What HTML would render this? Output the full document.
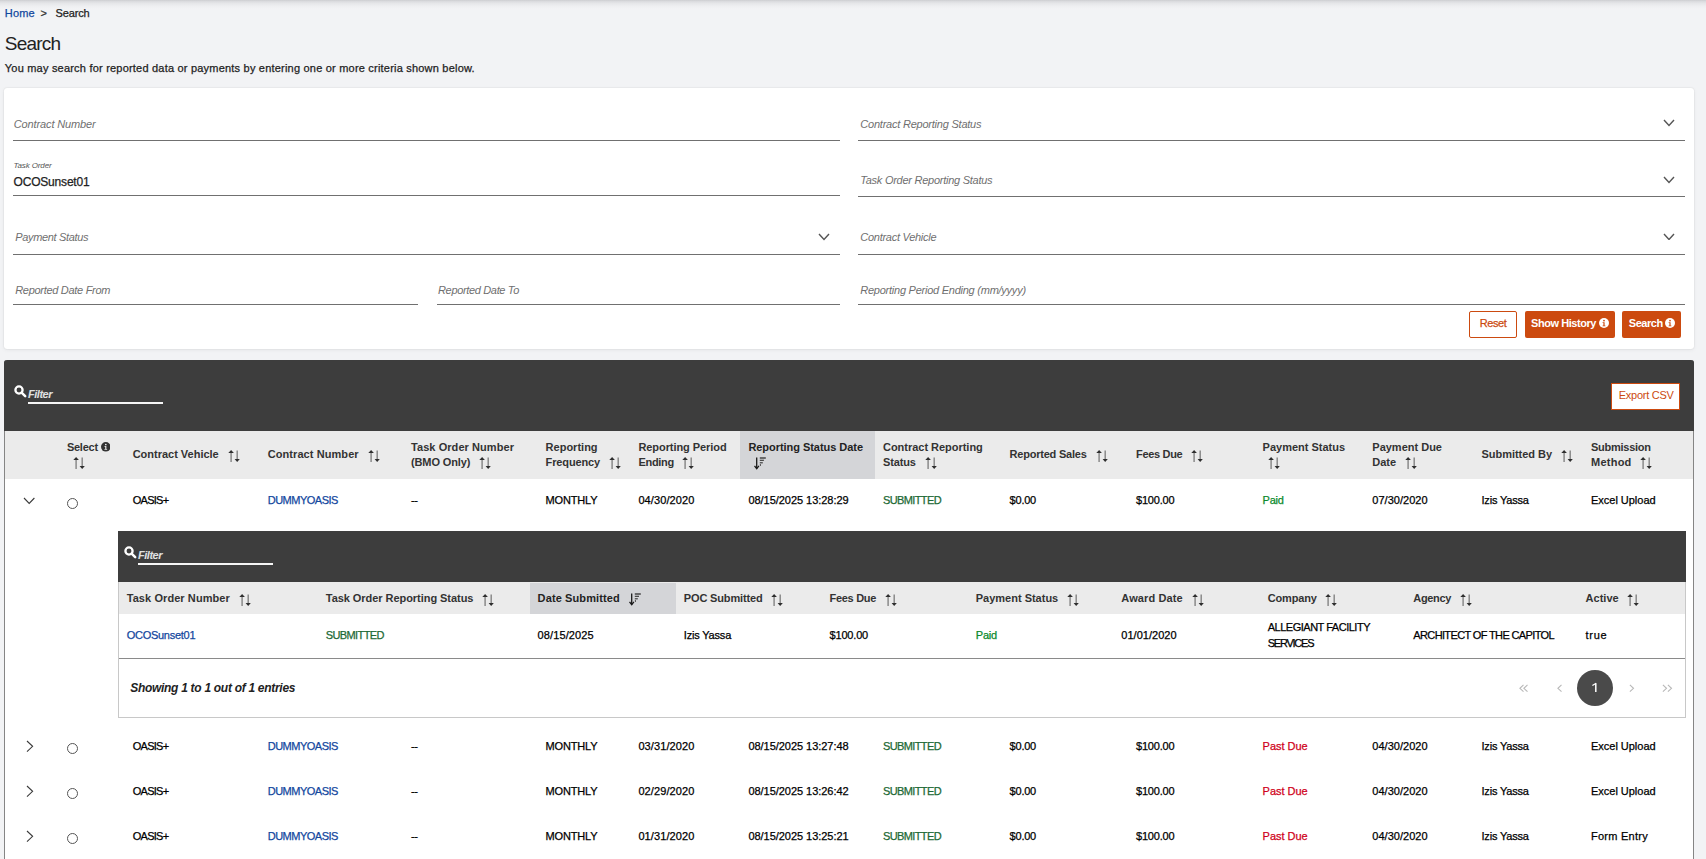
<!DOCTYPE html>
<html><head><meta charset="utf-8"><title>Search</title>
<style>
html,body{margin:0;padding:0;}
body{width:1706px;height:859px;overflow:hidden;position:relative;background:#f2f3f5;font-family:"Liberation Sans",sans-serif;}
.t{position:absolute;white-space:pre;line-height:1;}
.r{-webkit-text-stroke:0.25px currentColor;}
</style></head><body>
<div id="t0" class="t r" style="letter-spacing:0.164px;left:4.8px;top:7.59px;font-size:11px;font-weight:400;font-style:normal;color:#12479e;font-family:'Liberation Sans',sans-serif;">Home</div>
<div id="t1" class="t r" style="left:40.5px;top:7.59px;font-size:11px;font-weight:400;font-style:normal;color:#333;font-family:'Liberation Sans',sans-serif;">&gt;</div>
<div id="t2" class="t r" style="letter-spacing:-0.143px;left:55.6px;top:7.59px;font-size:11px;font-weight:400;font-style:normal;color:#222;font-family:'Liberation Sans',sans-serif;">Search</div>
<div id="t3" class="t" style="letter-spacing:-0.784px;left:4.8px;top:34.32px;font-size:19px;font-weight:400;font-style:normal;color:#222;font-family:'Liberation Sans',sans-serif;">Search</div>
<div id="t4" class="t r" style="letter-spacing:0.206px;left:4.8px;top:63.39px;font-size:11px;font-weight:400;font-style:normal;color:#222;font-family:'Liberation Sans',sans-serif;">You may search for reported data or payments by entering one or more criteria shown below.</div>
<div style="position:absolute;left:4px;top:88px;width:1690px;height:260.5px;background:#fff;border-radius:3px;box-shadow:0 0 1.5px rgba(0,0,0,0.14),0 1px 4px rgba(0,0,0,0.06)"></div>
<div id="t5" class="t" style="letter-spacing:-0.118px;left:13.7px;top:118.59px;font-size:11px;font-weight:400;font-style:italic;color:#6f6f6f;font-family:'Liberation Sans',sans-serif;">Contract Number</div>
<div style="position:absolute;left:13px;top:139.5px;width:827px;height:1.2px;background:#707070"></div>
<div id="t6" class="t" style="letter-spacing:-0.128px;left:13.5px;top:161.93px;font-size:8px;font-weight:400;font-style:italic;color:#555;font-family:'Liberation Sans',sans-serif;">Task Order</div>
<div id="t7" class="t r" style="letter-spacing:-0.186px;left:13.5px;top:175.74px;font-size:12px;font-weight:400;font-style:normal;color:#222;font-family:'Liberation Sans',sans-serif;">OCOSunset01</div>
<div style="position:absolute;left:13px;top:195.0px;width:827px;height:1.2px;background:#707070"></div>
<div id="t8" class="t" style="letter-spacing:-0.333px;left:15.2px;top:231.79px;font-size:11px;font-weight:400;font-style:italic;color:#6f6f6f;font-family:'Liberation Sans',sans-serif;">Payment Status</div>
<svg style="position:absolute;left:818.0px;top:233.25px" width="12" height="7.5" viewBox="0 0 12 7.5"><path d="M1 1L6.0 6.5L11 1" stroke="#555" stroke-width="1.4" fill="none"/></svg>
<div style="position:absolute;left:13px;top:253.8px;width:827px;height:1.2px;background:#707070"></div>
<div id="t9" class="t" style="letter-spacing:-0.293px;left:15.2px;top:285.39px;font-size:11px;font-weight:400;font-style:italic;color:#6f6f6f;font-family:'Liberation Sans',sans-serif;">Reported Date From</div>
<div style="position:absolute;left:13px;top:303.9px;width:405px;height:1.2px;background:#707070"></div>
<div id="t10" class="t" style="letter-spacing:-0.340px;left:438px;top:285.39px;font-size:11px;font-weight:400;font-style:italic;color:#6f6f6f;font-family:'Liberation Sans',sans-serif;">Reported Date To</div>
<div style="position:absolute;left:436.5px;top:303.9px;width:403.5px;height:1.2px;background:#707070"></div>
<div id="t11" class="t" style="letter-spacing:-0.223px;left:860.3px;top:118.59px;font-size:11px;font-weight:400;font-style:italic;color:#6f6f6f;font-family:'Liberation Sans',sans-serif;">Contract Reporting Status</div>
<svg style="position:absolute;left:1663.0px;top:119.05px" width="12" height="7.5" viewBox="0 0 12 7.5"><path d="M1 1L6.0 6.5L11 1" stroke="#555" stroke-width="1.4" fill="none"/></svg>
<div style="position:absolute;left:858px;top:139.8px;width:827px;height:1.2px;background:#707070"></div>
<div id="t12" class="t" style="letter-spacing:-0.259px;left:860.3px;top:175.19px;font-size:11px;font-weight:400;font-style:italic;color:#6f6f6f;font-family:'Liberation Sans',sans-serif;">Task Order Reporting Status</div>
<svg style="position:absolute;left:1663.0px;top:176.05px" width="12" height="7.5" viewBox="0 0 12 7.5"><path d="M1 1L6.0 6.5L11 1" stroke="#555" stroke-width="1.4" fill="none"/></svg>
<div style="position:absolute;left:858px;top:195.8px;width:827px;height:1.2px;background:#707070"></div>
<div id="t13" class="t" style="letter-spacing:-0.270px;left:860.3px;top:231.79px;font-size:11px;font-weight:400;font-style:italic;color:#6f6f6f;font-family:'Liberation Sans',sans-serif;">Contract Vehicle</div>
<svg style="position:absolute;left:1663.0px;top:232.75px" width="12" height="7.5" viewBox="0 0 12 7.5"><path d="M1 1L6.0 6.5L11 1" stroke="#555" stroke-width="1.4" fill="none"/></svg>
<div style="position:absolute;left:858px;top:253.8px;width:827px;height:1.2px;background:#707070"></div>
<div id="t14" class="t" style="letter-spacing:-0.246px;left:860.3px;top:285.39px;font-size:11px;font-weight:400;font-style:italic;color:#6f6f6f;font-family:'Liberation Sans',sans-serif;">Reporting Period Ending (mm/yyyy)</div>
<div style="position:absolute;left:858px;top:303.9px;width:827px;height:1.2px;background:#707070"></div>
<div style="position:absolute;left:1469px;top:311px;width:48px;height:27px;box-sizing:border-box;border:1px solid #cc4a0f;border-radius:2px;background:#fff"></div>
<div id="t15" class="t r" style="letter-spacing:-0.410px;left:1479.7px;top:318.09px;font-size:11px;font-weight:400;font-style:normal;color:#cc4a0f;font-family:'Liberation Sans',sans-serif;">Reset</div>
<div style="position:absolute;left:1525px;top:311px;width:90px;height:27px;background:#cc4a0f;border-radius:2px"></div>
<div id="t16" class="t" style="letter-spacing:-0.441px;left:1531px;top:318.09px;font-size:11px;font-weight:700;font-style:normal;color:#fff;font-family:'Liberation Sans',sans-serif;">Show History</div>
<svg style="position:absolute;left:1598.6px;top:318.3px" width="10" height="10" viewBox="0 0 10 10"><circle cx="5" cy="5" r="5" fill="#fff"/><circle cx="5" cy="2.6" r="0.9" fill="#cc4a0f"/><path d="M3.6 4.2H5.6V7.4H6.4V8.2H3.6V7.4H4.4V5H3.6Z" fill="#cc4a0f"/></svg>
<div style="position:absolute;left:1622px;top:311px;width:59px;height:27px;background:#cc4a0f;border-radius:2px"></div>
<div id="t17" class="t" style="letter-spacing:-0.451px;left:1628.8px;top:318.09px;font-size:11px;font-weight:700;font-style:normal;color:#fff;font-family:'Liberation Sans',sans-serif;">Search</div>
<svg style="position:absolute;left:1665px;top:318.3px" width="10" height="10" viewBox="0 0 10 10"><circle cx="5" cy="5" r="5" fill="#fff"/><circle cx="5" cy="2.6" r="0.9" fill="#cc4a0f"/><path d="M3.6 4.2H5.6V7.4H6.4V8.2H3.6V7.4H4.4V5H3.6Z" fill="#cc4a0f"/></svg>
<div style="position:absolute;left:4px;top:360px;width:1690px;height:499px;background:#fff;border-left:1px solid #858585;border-right:1px solid #858585;box-sizing:border-box;border-top-left-radius:3px;border-top-right-radius:3px"></div>
<div style="position:absolute;left:4px;top:360px;width:1690px;height:71px;background:#3d3d3d;border-top-left-radius:3px;border-top-right-radius:3px"></div>
<svg style="position:absolute;left:13.7px;top:385.3px" width="13" height="13" viewBox="0 0 13 13"><circle cx="5" cy="5" r="3.6" stroke="#fff" stroke-width="2.3" fill="none"/><path d="M7.6 7.6L11.2 11.2" stroke="#fff" stroke-width="2.5" stroke-linecap="round"/></svg>
<div id="t18" class="t" style="letter-spacing:-0.484px;left:28px;top:388.69px;font-size:11px;font-weight:700;font-style:italic;color:#e0e0e0;font-family:'Liberation Sans',sans-serif;">Filter</div>
<div style="position:absolute;left:28px;top:401.8px;width:135px;height:2px;background:#f5f5f5"></div>
<div style="position:absolute;left:1611px;top:383px;width:69px;height:27px;box-sizing:border-box;border:1.5px solid #cc4a0f;background:#fff"></div>
<div id="t19" class="t r" style="letter-spacing:-0.247px;left:1618.7px;top:389.69px;font-size:11px;font-weight:400;font-style:normal;color:#cc4a0f;font-family:'Liberation Sans',sans-serif;-webkit-text-stroke:0;">Export CSV</div>
<div style="position:absolute;left:5px;top:431px;width:1688px;height:47.5px;background:#ebebeb"></div>
<div style="position:absolute;left:740px;top:431px;width:135px;height:47.5px;background:#d4d5d8"></div>
<div id="t20" class="t" style="letter-spacing:-0.237px;left:66.9px;top:442.39px;font-size:11px;font-weight:700;font-style:normal;color:#333;font-family:'Liberation Sans',sans-serif;">Select</div>
<svg style="position:absolute;left:100.8px;top:442.2px" width="9.6" height="9.6" viewBox="0 0 10 10"><circle cx="5" cy="5" r="5" fill="#333"/><circle cx="5" cy="2.6" r="0.9" fill="#ebebeb"/><path d="M3.6 4.2H5.6V7.4H6.4V8.2H3.6V7.4H4.4V5H3.6Z" fill="#ebebeb"/></svg>
<svg style="position:absolute;left:72.5px;top:457px" width="13" height="13" viewBox="0 0 13 13"><path d="M3.1 2.4V12" stroke="#8a8a8a" stroke-width="1.5"/><path d="M0.3 3.1L3.1 0L5.9 3.1Z" fill="#2e2e2e"/><path d="M9.2 0.5V10.2" stroke="#8a8a8a" stroke-width="1.5"/><path d="M6.6 9L9.2 12.1L11.8 9Z" fill="#2e2e2e"/></svg>
<div id="t21" class="t" style="letter-spacing:-0.013px;left:132.7px;top:448.79px;font-size:11px;font-weight:700;font-style:normal;color:#333;font-family:'Liberation Sans',sans-serif;">Contract Vehicle</div>
<svg style="position:absolute;left:228px;top:449.7px" width="13" height="13" viewBox="0 0 13 13"><path d="M3.1 2.4V12" stroke="#8a8a8a" stroke-width="1.5"/><path d="M0.3 3.1L3.1 0L5.9 3.1Z" fill="#2e2e2e"/><path d="M9.2 0.5V10.2" stroke="#8a8a8a" stroke-width="1.5"/><path d="M6.6 9L9.2 12.1L11.8 9Z" fill="#2e2e2e"/></svg>
<div id="t22" class="t" style="letter-spacing:0.077px;left:267.7px;top:448.79px;font-size:11px;font-weight:700;font-style:normal;color:#333;font-family:'Liberation Sans',sans-serif;">Contract Number</div>
<svg style="position:absolute;left:368px;top:449.7px" width="13" height="13" viewBox="0 0 13 13"><path d="M3.1 2.4V12" stroke="#8a8a8a" stroke-width="1.5"/><path d="M0.3 3.1L3.1 0L5.9 3.1Z" fill="#2e2e2e"/><path d="M9.2 0.5V10.2" stroke="#8a8a8a" stroke-width="1.5"/><path d="M6.6 9L9.2 12.1L11.8 9Z" fill="#2e2e2e"/></svg>
<div id="t23" class="t" style="letter-spacing:0.065px;left:411px;top:441.79px;font-size:11px;font-weight:700;font-style:normal;color:#333;font-family:'Liberation Sans',sans-serif;">Task Order Number</div>
<div id="t24" class="t" style="letter-spacing:-0.120px;left:411px;top:456.99px;font-size:11px;font-weight:700;font-style:normal;color:#333;font-family:'Liberation Sans',sans-serif;">(BMO Only)</div>
<svg style="position:absolute;left:479px;top:457px" width="13" height="13" viewBox="0 0 13 13"><path d="M3.1 2.4V12" stroke="#8a8a8a" stroke-width="1.5"/><path d="M0.3 3.1L3.1 0L5.9 3.1Z" fill="#2e2e2e"/><path d="M9.2 0.5V10.2" stroke="#8a8a8a" stroke-width="1.5"/><path d="M6.6 9L9.2 12.1L11.8 9Z" fill="#2e2e2e"/></svg>
<div id="t25" class="t" style="letter-spacing:0.005px;left:545.6px;top:441.79px;font-size:11px;font-weight:700;font-style:normal;color:#333;font-family:'Liberation Sans',sans-serif;">Reporting</div>
<div id="t26" class="t" style="letter-spacing:-0.138px;left:545.6px;top:456.99px;font-size:11px;font-weight:700;font-style:normal;color:#333;font-family:'Liberation Sans',sans-serif;">Frequency</div>
<svg style="position:absolute;left:609px;top:457px" width="13" height="13" viewBox="0 0 13 13"><path d="M3.1 2.4V12" stroke="#8a8a8a" stroke-width="1.5"/><path d="M0.3 3.1L3.1 0L5.9 3.1Z" fill="#2e2e2e"/><path d="M9.2 0.5V10.2" stroke="#8a8a8a" stroke-width="1.5"/><path d="M6.6 9L9.2 12.1L11.8 9Z" fill="#2e2e2e"/></svg>
<div id="t27" class="t" style="letter-spacing:-0.065px;left:638.4px;top:441.79px;font-size:11px;font-weight:700;font-style:normal;color:#333;font-family:'Liberation Sans',sans-serif;">Reporting Period</div>
<div id="t28" class="t" style="letter-spacing:-0.280px;left:638.4px;top:456.99px;font-size:11px;font-weight:700;font-style:normal;color:#333;font-family:'Liberation Sans',sans-serif;">Ending</div>
<svg style="position:absolute;left:681.7px;top:457px" width="13" height="13" viewBox="0 0 13 13"><path d="M3.1 2.4V12" stroke="#8a8a8a" stroke-width="1.5"/><path d="M0.3 3.1L3.1 0L5.9 3.1Z" fill="#2e2e2e"/><path d="M9.2 0.5V10.2" stroke="#8a8a8a" stroke-width="1.5"/><path d="M6.6 9L9.2 12.1L11.8 9Z" fill="#2e2e2e"/></svg>
<div id="t29" class="t" style="letter-spacing:-0.044px;left:748.4px;top:441.69px;font-size:11px;font-weight:700;font-style:normal;color:#222;font-family:'Liberation Sans',sans-serif;">Reporting Status Date</div>
<svg style="position:absolute;left:753.5px;top:456.5px" width="13" height="13" viewBox="0 0 13 13"><path d="M2.7 0.6V11.5" stroke="#1a1a1a" stroke-width="1.3"/><path d="M0.5 8.9L2.7 11.6L4.9 8.9" stroke="#1a1a1a" stroke-width="1.3" fill="none"/><path d="M5.8 1H11.8" stroke="#111" stroke-width="1.1"/><path d="M5.8 3.3H10" stroke="#333" stroke-width="1.1"/><path d="M5.8 5.8H8.8" stroke="#333" stroke-width="1.1"/><circle cx="6.4" cy="8" r="0.65" fill="#111"/></svg>
<div id="t30" class="t" style="letter-spacing:-0.024px;left:883px;top:441.79px;font-size:11px;font-weight:700;font-style:normal;color:#333;font-family:'Liberation Sans',sans-serif;">Contract Reporting</div>
<div id="t31" class="t" style="letter-spacing:-0.154px;left:883px;top:456.99px;font-size:11px;font-weight:700;font-style:normal;color:#333;font-family:'Liberation Sans',sans-serif;">Status</div>
<svg style="position:absolute;left:925px;top:457px" width="13" height="13" viewBox="0 0 13 13"><path d="M3.1 2.4V12" stroke="#8a8a8a" stroke-width="1.5"/><path d="M0.3 3.1L3.1 0L5.9 3.1Z" fill="#2e2e2e"/><path d="M9.2 0.5V10.2" stroke="#8a8a8a" stroke-width="1.5"/><path d="M6.6 9L9.2 12.1L11.8 9Z" fill="#2e2e2e"/></svg>
<div id="t32" class="t" style="letter-spacing:-0.221px;left:1009.6px;top:448.79px;font-size:11px;font-weight:700;font-style:normal;color:#333;font-family:'Liberation Sans',sans-serif;">Reported Sales</div>
<svg style="position:absolute;left:1096.3px;top:449.7px" width="13" height="13" viewBox="0 0 13 13"><path d="M3.1 2.4V12" stroke="#8a8a8a" stroke-width="1.5"/><path d="M0.3 3.1L3.1 0L5.9 3.1Z" fill="#2e2e2e"/><path d="M9.2 0.5V10.2" stroke="#8a8a8a" stroke-width="1.5"/><path d="M6.6 9L9.2 12.1L11.8 9Z" fill="#2e2e2e"/></svg>
<div id="t33" class="t" style="letter-spacing:-0.315px;left:1136px;top:448.79px;font-size:11px;font-weight:700;font-style:normal;color:#333;font-family:'Liberation Sans',sans-serif;">Fees Due</div>
<svg style="position:absolute;left:1191.3px;top:449.7px" width="13" height="13" viewBox="0 0 13 13"><path d="M3.1 2.4V12" stroke="#8a8a8a" stroke-width="1.5"/><path d="M0.3 3.1L3.1 0L5.9 3.1Z" fill="#2e2e2e"/><path d="M9.2 0.5V10.2" stroke="#8a8a8a" stroke-width="1.5"/><path d="M6.6 9L9.2 12.1L11.8 9Z" fill="#2e2e2e"/></svg>
<div id="t34" class="t" style="letter-spacing:-0.009px;left:1262.6px;top:441.79px;font-size:11px;font-weight:700;font-style:normal;color:#333;font-family:'Liberation Sans',sans-serif;">Payment Status</div>
<div id="t35" class="t" style="left:1262.6px;top:456.99px;font-size:11px;font-weight:700;font-style:normal;color:#333;font-family:'Liberation Sans',sans-serif;"></div>
<svg style="position:absolute;left:1268.3px;top:457px" width="13" height="13" viewBox="0 0 13 13"><path d="M3.1 2.4V12" stroke="#8a8a8a" stroke-width="1.5"/><path d="M0.3 3.1L3.1 0L5.9 3.1Z" fill="#2e2e2e"/><path d="M9.2 0.5V10.2" stroke="#8a8a8a" stroke-width="1.5"/><path d="M6.6 9L9.2 12.1L11.8 9Z" fill="#2e2e2e"/></svg>
<div id="t36" class="t" style="letter-spacing:-0.000px;left:1372.3px;top:441.79px;font-size:11px;font-weight:700;font-style:normal;color:#333;font-family:'Liberation Sans',sans-serif;">Payment Due</div>
<div id="t37" class="t" style="letter-spacing:-0.036px;left:1372.3px;top:456.99px;font-size:11px;font-weight:700;font-style:normal;color:#333;font-family:'Liberation Sans',sans-serif;">Date</div>
<svg style="position:absolute;left:1405px;top:457px" width="13" height="13" viewBox="0 0 13 13"><path d="M3.1 2.4V12" stroke="#8a8a8a" stroke-width="1.5"/><path d="M0.3 3.1L3.1 0L5.9 3.1Z" fill="#2e2e2e"/><path d="M9.2 0.5V10.2" stroke="#8a8a8a" stroke-width="1.5"/><path d="M6.6 9L9.2 12.1L11.8 9Z" fill="#2e2e2e"/></svg>
<div id="t38" class="t" style="letter-spacing:-0.034px;left:1481.5px;top:448.79px;font-size:11px;font-weight:700;font-style:normal;color:#333;font-family:'Liberation Sans',sans-serif;">Submitted By</div>
<svg style="position:absolute;left:1561px;top:449.7px" width="13" height="13" viewBox="0 0 13 13"><path d="M3.1 2.4V12" stroke="#8a8a8a" stroke-width="1.5"/><path d="M0.3 3.1L3.1 0L5.9 3.1Z" fill="#2e2e2e"/><path d="M9.2 0.5V10.2" stroke="#8a8a8a" stroke-width="1.5"/><path d="M6.6 9L9.2 12.1L11.8 9Z" fill="#2e2e2e"/></svg>
<div id="t39" class="t" style="letter-spacing:-0.254px;left:1591px;top:441.79px;font-size:11px;font-weight:700;font-style:normal;color:#333;font-family:'Liberation Sans',sans-serif;">Submission</div>
<div id="t40" class="t" style="letter-spacing:0.248px;left:1591px;top:456.99px;font-size:11px;font-weight:700;font-style:normal;color:#333;font-family:'Liberation Sans',sans-serif;">Method</div>
<svg style="position:absolute;left:1639.8px;top:457px" width="13" height="13" viewBox="0 0 13 13"><path d="M3.1 2.4V12" stroke="#8a8a8a" stroke-width="1.5"/><path d="M0.3 3.1L3.1 0L5.9 3.1Z" fill="#2e2e2e"/><path d="M9.2 0.5V10.2" stroke="#8a8a8a" stroke-width="1.5"/><path d="M6.6 9L9.2 12.1L11.8 9Z" fill="#2e2e2e"/></svg>
<svg style="position:absolute;left:23.25px;top:497.2px" width="12.4" height="7.4" viewBox="0 0 12.4 7.4"><path d="M1 1L6.2 6.4L11.4 1" stroke="#3a3a3a" stroke-width="1.1" fill="none"/></svg>
<div style="position:absolute;left:66.95px;top:498.0px;width:11.0px;height:11.0px;box-sizing:border-box;border:1.1px solid #555;border-radius:50%;background:#fff"></div>
<div id="t41" class="t r" style="letter-spacing:-0.724px;left:132.7px;top:494.89px;font-size:11px;font-weight:400;font-style:normal;color:#000;font-family:'Liberation Sans',sans-serif;">OASIS+</div>
<div id="t42" class="t r" style="letter-spacing:-0.489px;left:267.7px;top:494.89px;font-size:11px;font-weight:400;font-style:normal;color:#12479e;font-family:'Liberation Sans',sans-serif;">DUMMYOASIS</div>
<div id="t43" class="t r" style="letter-spacing:-0.514px;left:411px;top:494.89px;font-size:11px;font-weight:400;font-style:normal;color:#000;font-family:'Liberation Sans',sans-serif;">--</div>
<div id="t44" class="t r" style="letter-spacing:-0.181px;left:545.6px;top:494.89px;font-size:11px;font-weight:400;font-style:normal;color:#000;font-family:'Liberation Sans',sans-serif;">MONTHLY</div>
<div id="t45" class="t r" style="letter-spacing:0.094px;left:638.4px;top:494.89px;font-size:11px;font-weight:400;font-style:normal;color:#000;font-family:'Liberation Sans',sans-serif;">04/30/2020</div>
<div id="t46" class="t r" style="letter-spacing:-0.039px;left:748.4px;top:494.89px;font-size:11px;font-weight:400;font-style:normal;color:#000;font-family:'Liberation Sans',sans-serif;">08/15/2025 13:28:29</div>
<div id="t47" class="t r" style="letter-spacing:-0.618px;left:883px;top:494.89px;font-size:11px;font-weight:400;font-style:normal;color:#1c6934;font-family:'Liberation Sans',sans-serif;">SUBMITTED</div>
<div id="t48" class="t r" style="letter-spacing:-0.226px;left:1009.6px;top:494.89px;font-size:11px;font-weight:400;font-style:normal;color:#000;font-family:'Liberation Sans',sans-serif;">$0.00</div>
<div id="t49" class="t r" style="letter-spacing:-0.195px;left:1136px;top:494.89px;font-size:11px;font-weight:400;font-style:normal;color:#000;font-family:'Liberation Sans',sans-serif;">$100.00</div>
<div id="t50" class="t r" style="letter-spacing:-0.233px;left:1262.6px;top:494.89px;font-size:11px;font-weight:400;font-style:normal;color:#0b8a2c;font-family:'Liberation Sans',sans-serif;">Paid</div>
<div id="t51" class="t r" style="letter-spacing:0.024px;left:1372.3px;top:494.89px;font-size:11px;font-weight:400;font-style:normal;color:#000;font-family:'Liberation Sans',sans-serif;">07/30/2020</div>
<div id="t52" class="t r" style="letter-spacing:-0.183px;left:1481.5px;top:494.89px;font-size:11px;font-weight:400;font-style:normal;color:#000;font-family:'Liberation Sans',sans-serif;">Izis Yassa</div>
<div id="t53" class="t r" style="letter-spacing:-0.019px;left:1591px;top:494.89px;font-size:11px;font-weight:400;font-style:normal;color:#000;font-family:'Liberation Sans',sans-serif;">Excel Upload</div>
<div style="position:absolute;left:118px;top:531px;width:1568px;height:51px;background:#3d3d3d"></div>
<svg style="position:absolute;left:123.7px;top:545.7px" width="13" height="13" viewBox="0 0 13 13"><circle cx="5" cy="5" r="3.6" stroke="#fff" stroke-width="2.3" fill="none"/><path d="M7.6 7.6L11.2 11.2" stroke="#fff" stroke-width="2.5" stroke-linecap="round"/></svg>
<div id="t54" class="t" style="letter-spacing:-0.484px;left:138px;top:549.59px;font-size:11px;font-weight:700;font-style:italic;color:#e0e0e0;font-family:'Liberation Sans',sans-serif;">Filter</div>
<div style="position:absolute;left:138px;top:562.7px;width:135px;height:2px;background:#f5f5f5"></div>
<div style="position:absolute;left:118px;top:582px;width:1568px;height:135.5px;box-sizing:border-box;border:1px solid #c8c8c8;border-top:none;background:#fff"></div>
<div style="position:absolute;left:119px;top:582px;width:1566px;height:31.8px;background:#ebebeb"></div>
<div style="position:absolute;left:530px;top:582.5px;width:146px;height:31.3px;background:#d4d5d8"></div>
<div style="position:absolute;left:119px;top:657.8px;width:1566px;height:1.3px;background:#8a8a8a"></div>
<div id="t55" class="t" style="letter-spacing:0.077px;left:126.7px;top:592.59px;font-size:11px;font-weight:700;font-style:normal;color:#333;font-family:'Liberation Sans',sans-serif;">Task Order Number</div>
<svg style="position:absolute;left:239px;top:593.5px" width="13" height="13" viewBox="0 0 13 13"><path d="M3.1 2.4V12" stroke="#8a8a8a" stroke-width="1.5"/><path d="M0.3 3.1L3.1 0L5.9 3.1Z" fill="#2e2e2e"/><path d="M9.2 0.5V10.2" stroke="#8a8a8a" stroke-width="1.5"/><path d="M6.6 9L9.2 12.1L11.8 9Z" fill="#2e2e2e"/></svg>
<div id="t56" class="t" style="letter-spacing:-0.050px;left:325.8px;top:592.59px;font-size:11px;font-weight:700;font-style:normal;color:#333;font-family:'Liberation Sans',sans-serif;">Task Order Reporting Status</div>
<svg style="position:absolute;left:482.3px;top:593.5px" width="13" height="13" viewBox="0 0 13 13"><path d="M3.1 2.4V12" stroke="#8a8a8a" stroke-width="1.5"/><path d="M0.3 3.1L3.1 0L5.9 3.1Z" fill="#2e2e2e"/><path d="M9.2 0.5V10.2" stroke="#8a8a8a" stroke-width="1.5"/><path d="M6.6 9L9.2 12.1L11.8 9Z" fill="#2e2e2e"/></svg>
<div id="t57" class="t" style="letter-spacing:0.115px;left:537.6px;top:592.59px;font-size:11px;font-weight:700;font-style:normal;color:#222;font-family:'Liberation Sans',sans-serif;">Date Submitted</div>
<svg style="position:absolute;left:628.5px;top:593.3px" width="13" height="13" viewBox="0 0 13 13"><path d="M2.7 0.6V11.5" stroke="#1a1a1a" stroke-width="1.3"/><path d="M0.5 8.9L2.7 11.6L4.9 8.9" stroke="#1a1a1a" stroke-width="1.3" fill="none"/><path d="M5.8 1H11.8" stroke="#111" stroke-width="1.1"/><path d="M5.8 3.3H10" stroke="#333" stroke-width="1.1"/><path d="M5.8 5.8H8.8" stroke="#333" stroke-width="1.1"/><circle cx="6.4" cy="8" r="0.65" fill="#111"/></svg>
<div id="t58" class="t" style="letter-spacing:-0.152px;left:683.8px;top:592.59px;font-size:11px;font-weight:700;font-style:normal;color:#333;font-family:'Liberation Sans',sans-serif;">POC Submitted</div>
<svg style="position:absolute;left:770.5px;top:593.5px" width="13" height="13" viewBox="0 0 13 13"><path d="M3.1 2.4V12" stroke="#8a8a8a" stroke-width="1.5"/><path d="M0.3 3.1L3.1 0L5.9 3.1Z" fill="#2e2e2e"/><path d="M9.2 0.5V10.2" stroke="#8a8a8a" stroke-width="1.5"/><path d="M6.6 9L9.2 12.1L11.8 9Z" fill="#2e2e2e"/></svg>
<div id="t59" class="t" style="letter-spacing:-0.315px;left:829.6px;top:592.59px;font-size:11px;font-weight:700;font-style:normal;color:#333;font-family:'Liberation Sans',sans-serif;">Fees Due</div>
<svg style="position:absolute;left:884.7px;top:593.5px" width="13" height="13" viewBox="0 0 13 13"><path d="M3.1 2.4V12" stroke="#8a8a8a" stroke-width="1.5"/><path d="M0.3 3.1L3.1 0L5.9 3.1Z" fill="#2e2e2e"/><path d="M9.2 0.5V10.2" stroke="#8a8a8a" stroke-width="1.5"/><path d="M6.6 9L9.2 12.1L11.8 9Z" fill="#2e2e2e"/></svg>
<div id="t60" class="t" style="letter-spacing:-0.009px;left:975.8px;top:592.59px;font-size:11px;font-weight:700;font-style:normal;color:#333;font-family:'Liberation Sans',sans-serif;">Payment Status</div>
<svg style="position:absolute;left:1067px;top:593.5px" width="13" height="13" viewBox="0 0 13 13"><path d="M3.1 2.4V12" stroke="#8a8a8a" stroke-width="1.5"/><path d="M0.3 3.1L3.1 0L5.9 3.1Z" fill="#2e2e2e"/><path d="M9.2 0.5V10.2" stroke="#8a8a8a" stroke-width="1.5"/><path d="M6.6 9L9.2 12.1L11.8 9Z" fill="#2e2e2e"/></svg>
<div id="t61" class="t" style="letter-spacing:0.117px;left:1121.3px;top:592.59px;font-size:11px;font-weight:700;font-style:normal;color:#333;font-family:'Liberation Sans',sans-serif;">Award Date</div>
<svg style="position:absolute;left:1191.6px;top:593.5px" width="13" height="13" viewBox="0 0 13 13"><path d="M3.1 2.4V12" stroke="#8a8a8a" stroke-width="1.5"/><path d="M0.3 3.1L3.1 0L5.9 3.1Z" fill="#2e2e2e"/><path d="M9.2 0.5V10.2" stroke="#8a8a8a" stroke-width="1.5"/><path d="M6.6 9L9.2 12.1L11.8 9Z" fill="#2e2e2e"/></svg>
<div id="t62" class="t" style="letter-spacing:-0.161px;left:1267.7px;top:592.59px;font-size:11px;font-weight:700;font-style:normal;color:#333;font-family:'Liberation Sans',sans-serif;">Company</div>
<svg style="position:absolute;left:1324.5px;top:593.5px" width="13" height="13" viewBox="0 0 13 13"><path d="M3.1 2.4V12" stroke="#8a8a8a" stroke-width="1.5"/><path d="M0.3 3.1L3.1 0L5.9 3.1Z" fill="#2e2e2e"/><path d="M9.2 0.5V10.2" stroke="#8a8a8a" stroke-width="1.5"/><path d="M6.6 9L9.2 12.1L11.8 9Z" fill="#2e2e2e"/></svg>
<div id="t63" class="t" style="letter-spacing:-0.342px;left:1413.3px;top:592.59px;font-size:11px;font-weight:700;font-style:normal;color:#333;font-family:'Liberation Sans',sans-serif;">Agency</div>
<svg style="position:absolute;left:1459.5px;top:593.5px" width="13" height="13" viewBox="0 0 13 13"><path d="M3.1 2.4V12" stroke="#8a8a8a" stroke-width="1.5"/><path d="M0.3 3.1L3.1 0L5.9 3.1Z" fill="#2e2e2e"/><path d="M9.2 0.5V10.2" stroke="#8a8a8a" stroke-width="1.5"/><path d="M6.6 9L9.2 12.1L11.8 9Z" fill="#2e2e2e"/></svg>
<div id="t64" class="t" style="letter-spacing:0.011px;left:1585.6px;top:592.59px;font-size:11px;font-weight:700;font-style:normal;color:#333;font-family:'Liberation Sans',sans-serif;">Active</div>
<svg style="position:absolute;left:1626.5px;top:593.5px" width="13" height="13" viewBox="0 0 13 13"><path d="M3.1 2.4V12" stroke="#8a8a8a" stroke-width="1.5"/><path d="M0.3 3.1L3.1 0L5.9 3.1Z" fill="#2e2e2e"/><path d="M9.2 0.5V10.2" stroke="#8a8a8a" stroke-width="1.5"/><path d="M6.6 9L9.2 12.1L11.8 9Z" fill="#2e2e2e"/></svg>
<div id="t65" class="t r" style="letter-spacing:-0.268px;left:126.7px;top:629.89px;font-size:11px;font-weight:400;font-style:normal;color:#12479e;font-family:'Liberation Sans',sans-serif;">OCOSunset01</div>
<div id="t66" class="t r" style="letter-spacing:-0.618px;left:325.8px;top:629.89px;font-size:11px;font-weight:400;font-style:normal;color:#1c6934;font-family:'Liberation Sans',sans-serif;">SUBMITTED</div>
<div id="t67" class="t r" style="letter-spacing:0.104px;left:537.6px;top:629.89px;font-size:11px;font-weight:400;font-style:normal;color:#000;font-family:'Liberation Sans',sans-serif;">08/15/2025</div>
<div id="t68" class="t r" style="letter-spacing:-0.183px;left:683.8px;top:629.89px;font-size:11px;font-weight:400;font-style:normal;color:#000;font-family:'Liberation Sans',sans-serif;">Izis Yassa</div>
<div id="t69" class="t r" style="letter-spacing:-0.195px;left:829.6px;top:629.89px;font-size:11px;font-weight:400;font-style:normal;color:#000;font-family:'Liberation Sans',sans-serif;">$100.00</div>
<div id="t70" class="t r" style="letter-spacing:-0.233px;left:975.8px;top:629.89px;font-size:11px;font-weight:400;font-style:normal;color:#0b8a2c;font-family:'Liberation Sans',sans-serif;">Paid</div>
<div id="t71" class="t r" style="letter-spacing:0.024px;left:1121.3px;top:629.89px;font-size:11px;font-weight:400;font-style:normal;color:#000;font-family:'Liberation Sans',sans-serif;">01/01/2020</div>
<div id="t72" class="t r" style="letter-spacing:-0.487px;left:1267.7px;top:622.29px;font-size:11px;font-weight:400;font-style:normal;color:#000;font-family:'Liberation Sans',sans-serif;">ALLEGIANT FACILITY</div>
<div id="t73" class="t r" style="letter-spacing:-1.230px;left:1267.7px;top:637.89px;font-size:11px;font-weight:400;font-style:normal;color:#000;font-family:'Liberation Sans',sans-serif;">SERVICES</div>
<div id="t74" class="t r" style="letter-spacing:-0.632px;left:1413.3px;top:629.89px;font-size:11px;font-weight:400;font-style:normal;color:#000;font-family:'Liberation Sans',sans-serif;">ARCHITECT OF THE CAPITOL</div>
<div id="t75" class="t r" style="letter-spacing:0.683px;left:1585.6px;top:629.89px;font-size:11px;font-weight:400;font-style:normal;color:#000;font-family:'Liberation Sans',sans-serif;">true</div>
<div id="t76" class="t" style="letter-spacing:-0.291px;left:130.2px;top:681.74px;font-size:12px;font-weight:700;font-style:italic;color:#222;font-family:'Liberation Sans',sans-serif;">Showing 1 to 1 out of 1 entries</div>
<svg style="position:absolute;left:1518.5px;top:684px" width="6" height="8.5" viewBox="-0.3 -0.4 6 8.5"><path d="M4.2 0.5L0.6 3.9L4.2 7.3" stroke="#b8b8b8" stroke-width="1.1" fill="none"/></svg>
<svg style="position:absolute;left:1523.0px;top:684px" width="6" height="8.5" viewBox="-0.3 -0.4 6 8.5"><path d="M4.2 0.5L0.6 3.9L4.2 7.3" stroke="#b8b8b8" stroke-width="1.1" fill="none"/></svg>
<svg style="position:absolute;left:1556.7px;top:684px" width="6" height="8.5" viewBox="-0.3 -0.4 6 8.5"><path d="M4.2 0.5L0.6 3.9L4.2 7.3" stroke="#b8b8b8" stroke-width="1.1" fill="none"/></svg>
<div style="position:absolute;left:1577px;top:670px;width:36px;height:36px;border-radius:50%;background:#4a4a4a"></div>
<svg style="position:absolute;left:1590px;top:681px" width="10" height="13" viewBox="0 0 10 13"><path d="M5.8 2.4V11" stroke="#fff" stroke-width="1.5"/><path d="M6.2 2.2L2.4 4.6" stroke="#fff" stroke-width="1.2"/></svg>
<svg style="position:absolute;left:1628.7px;top:684px" width="6" height="8.5" viewBox="-0.3 -0.4 6 8.5"><path d="M0.6 0.5L4.2 3.9L0.6 7.3" stroke="#b8b8b8" stroke-width="1.1" fill="none"/></svg>
<svg style="position:absolute;left:1662.3px;top:684px" width="6" height="8.5" viewBox="-0.3 -0.4 6 8.5"><path d="M0.6 0.5L4.2 3.9L0.6 7.3" stroke="#b8b8b8" stroke-width="1.1" fill="none"/></svg>
<svg style="position:absolute;left:1666.8px;top:684px" width="6" height="8.5" viewBox="-0.3 -0.4 6 8.5"><path d="M0.6 0.5L4.2 3.9L0.6 7.3" stroke="#b8b8b8" stroke-width="1.1" fill="none"/></svg>
<svg style="position:absolute;left:26.2px;top:740.2px" width="7.6" height="12.6" viewBox="0 0 7.6 12.6"><path d="M1 1L6.6 6.3L1 11.6" stroke="#3a3a3a" stroke-width="1.1" fill="none"/></svg>
<div style="position:absolute;left:66.95px;top:742.8px;width:11.0px;height:11.0px;box-sizing:border-box;border:1.1px solid #555;border-radius:50%;background:#fff"></div>
<div id="t77" class="t r" style="letter-spacing:-0.724px;left:132.7px;top:740.59px;font-size:11px;font-weight:400;font-style:normal;color:#000;font-family:'Liberation Sans',sans-serif;">OASIS+</div>
<div id="t78" class="t r" style="letter-spacing:-0.489px;left:267.7px;top:740.59px;font-size:11px;font-weight:400;font-style:normal;color:#12479e;font-family:'Liberation Sans',sans-serif;">DUMMYOASIS</div>
<div id="t79" class="t r" style="letter-spacing:-0.514px;left:411px;top:740.59px;font-size:11px;font-weight:400;font-style:normal;color:#000;font-family:'Liberation Sans',sans-serif;">--</div>
<div id="t80" class="t r" style="letter-spacing:-0.181px;left:545.6px;top:740.59px;font-size:11px;font-weight:400;font-style:normal;color:#000;font-family:'Liberation Sans',sans-serif;">MONTHLY</div>
<div id="t81" class="t r" style="letter-spacing:0.094px;left:638.4px;top:740.59px;font-size:11px;font-weight:400;font-style:normal;color:#000;font-family:'Liberation Sans',sans-serif;">03/31/2020</div>
<div id="t82" class="t r" style="letter-spacing:-0.039px;left:748.4px;top:740.59px;font-size:11px;font-weight:400;font-style:normal;color:#000;font-family:'Liberation Sans',sans-serif;">08/15/2025 13:27:48</div>
<div id="t83" class="t r" style="letter-spacing:-0.618px;left:883px;top:740.59px;font-size:11px;font-weight:400;font-style:normal;color:#1c6934;font-family:'Liberation Sans',sans-serif;">SUBMITTED</div>
<div id="t84" class="t r" style="letter-spacing:-0.226px;left:1009.6px;top:740.59px;font-size:11px;font-weight:400;font-style:normal;color:#000;font-family:'Liberation Sans',sans-serif;">$0.00</div>
<div id="t85" class="t r" style="letter-spacing:-0.195px;left:1136px;top:740.59px;font-size:11px;font-weight:400;font-style:normal;color:#000;font-family:'Liberation Sans',sans-serif;">$100.00</div>
<div id="t86" class="t r" style="letter-spacing:-0.031px;left:1262.6px;top:740.59px;font-size:11px;font-weight:400;font-style:normal;color:#d0021b;font-family:'Liberation Sans',sans-serif;">Past Due</div>
<div id="t87" class="t r" style="letter-spacing:0.024px;left:1372.3px;top:740.59px;font-size:11px;font-weight:400;font-style:normal;color:#000;font-family:'Liberation Sans',sans-serif;">04/30/2020</div>
<div id="t88" class="t r" style="letter-spacing:-0.183px;left:1481.5px;top:740.59px;font-size:11px;font-weight:400;font-style:normal;color:#000;font-family:'Liberation Sans',sans-serif;">Izis Yassa</div>
<div id="t89" class="t r" style="letter-spacing:-0.019px;left:1591px;top:740.59px;font-size:11px;font-weight:400;font-style:normal;color:#000;font-family:'Liberation Sans',sans-serif;">Excel Upload</div>
<svg style="position:absolute;left:26.2px;top:785.3000000000001px" width="7.6" height="12.6" viewBox="0 0 7.6 12.6"><path d="M1 1L6.6 6.3L1 11.6" stroke="#3a3a3a" stroke-width="1.1" fill="none"/></svg>
<div style="position:absolute;left:66.95px;top:787.9px;width:11.0px;height:11.0px;box-sizing:border-box;border:1.1px solid #555;border-radius:50%;background:#fff"></div>
<div id="t90" class="t r" style="letter-spacing:-0.724px;left:132.7px;top:785.69px;font-size:11px;font-weight:400;font-style:normal;color:#000;font-family:'Liberation Sans',sans-serif;">OASIS+</div>
<div id="t91" class="t r" style="letter-spacing:-0.489px;left:267.7px;top:785.69px;font-size:11px;font-weight:400;font-style:normal;color:#12479e;font-family:'Liberation Sans',sans-serif;">DUMMYOASIS</div>
<div id="t92" class="t r" style="letter-spacing:-0.514px;left:411px;top:785.69px;font-size:11px;font-weight:400;font-style:normal;color:#000;font-family:'Liberation Sans',sans-serif;">--</div>
<div id="t93" class="t r" style="letter-spacing:-0.181px;left:545.6px;top:785.69px;font-size:11px;font-weight:400;font-style:normal;color:#000;font-family:'Liberation Sans',sans-serif;">MONTHLY</div>
<div id="t94" class="t r" style="letter-spacing:0.094px;left:638.4px;top:785.69px;font-size:11px;font-weight:400;font-style:normal;color:#000;font-family:'Liberation Sans',sans-serif;">02/29/2020</div>
<div id="t95" class="t r" style="letter-spacing:-0.039px;left:748.4px;top:785.69px;font-size:11px;font-weight:400;font-style:normal;color:#000;font-family:'Liberation Sans',sans-serif;">08/15/2025 13:26:42</div>
<div id="t96" class="t r" style="letter-spacing:-0.618px;left:883px;top:785.69px;font-size:11px;font-weight:400;font-style:normal;color:#1c6934;font-family:'Liberation Sans',sans-serif;">SUBMITTED</div>
<div id="t97" class="t r" style="letter-spacing:-0.226px;left:1009.6px;top:785.69px;font-size:11px;font-weight:400;font-style:normal;color:#000;font-family:'Liberation Sans',sans-serif;">$0.00</div>
<div id="t98" class="t r" style="letter-spacing:-0.195px;left:1136px;top:785.69px;font-size:11px;font-weight:400;font-style:normal;color:#000;font-family:'Liberation Sans',sans-serif;">$100.00</div>
<div id="t99" class="t r" style="letter-spacing:-0.031px;left:1262.6px;top:785.69px;font-size:11px;font-weight:400;font-style:normal;color:#d0021b;font-family:'Liberation Sans',sans-serif;">Past Due</div>
<div id="t100" class="t r" style="letter-spacing:0.024px;left:1372.3px;top:785.69px;font-size:11px;font-weight:400;font-style:normal;color:#000;font-family:'Liberation Sans',sans-serif;">04/30/2020</div>
<div id="t101" class="t r" style="letter-spacing:-0.183px;left:1481.5px;top:785.69px;font-size:11px;font-weight:400;font-style:normal;color:#000;font-family:'Liberation Sans',sans-serif;">Izis Yassa</div>
<div id="t102" class="t r" style="letter-spacing:-0.019px;left:1591px;top:785.69px;font-size:11px;font-weight:400;font-style:normal;color:#000;font-family:'Liberation Sans',sans-serif;">Excel Upload</div>
<svg style="position:absolute;left:26.2px;top:830.4000000000001px" width="7.6" height="12.6" viewBox="0 0 7.6 12.6"><path d="M1 1L6.6 6.3L1 11.6" stroke="#3a3a3a" stroke-width="1.1" fill="none"/></svg>
<div style="position:absolute;left:66.95px;top:833.0px;width:11.0px;height:11.0px;box-sizing:border-box;border:1.1px solid #555;border-radius:50%;background:#fff"></div>
<div id="t103" class="t r" style="letter-spacing:-0.724px;left:132.7px;top:830.79px;font-size:11px;font-weight:400;font-style:normal;color:#000;font-family:'Liberation Sans',sans-serif;">OASIS+</div>
<div id="t104" class="t r" style="letter-spacing:-0.489px;left:267.7px;top:830.79px;font-size:11px;font-weight:400;font-style:normal;color:#12479e;font-family:'Liberation Sans',sans-serif;">DUMMYOASIS</div>
<div id="t105" class="t r" style="letter-spacing:-0.514px;left:411px;top:830.79px;font-size:11px;font-weight:400;font-style:normal;color:#000;font-family:'Liberation Sans',sans-serif;">--</div>
<div id="t106" class="t r" style="letter-spacing:-0.181px;left:545.6px;top:830.79px;font-size:11px;font-weight:400;font-style:normal;color:#000;font-family:'Liberation Sans',sans-serif;">MONTHLY</div>
<div id="t107" class="t r" style="letter-spacing:0.094px;left:638.4px;top:830.79px;font-size:11px;font-weight:400;font-style:normal;color:#000;font-family:'Liberation Sans',sans-serif;">01/31/2020</div>
<div id="t108" class="t r" style="letter-spacing:-0.039px;left:748.4px;top:830.79px;font-size:11px;font-weight:400;font-style:normal;color:#000;font-family:'Liberation Sans',sans-serif;">08/15/2025 13:25:21</div>
<div id="t109" class="t r" style="letter-spacing:-0.618px;left:883px;top:830.79px;font-size:11px;font-weight:400;font-style:normal;color:#1c6934;font-family:'Liberation Sans',sans-serif;">SUBMITTED</div>
<div id="t110" class="t r" style="letter-spacing:-0.226px;left:1009.6px;top:830.79px;font-size:11px;font-weight:400;font-style:normal;color:#000;font-family:'Liberation Sans',sans-serif;">$0.00</div>
<div id="t111" class="t r" style="letter-spacing:-0.195px;left:1136px;top:830.79px;font-size:11px;font-weight:400;font-style:normal;color:#000;font-family:'Liberation Sans',sans-serif;">$100.00</div>
<div id="t112" class="t r" style="letter-spacing:-0.031px;left:1262.6px;top:830.79px;font-size:11px;font-weight:400;font-style:normal;color:#d0021b;font-family:'Liberation Sans',sans-serif;">Past Due</div>
<div id="t113" class="t r" style="letter-spacing:0.024px;left:1372.3px;top:830.79px;font-size:11px;font-weight:400;font-style:normal;color:#000;font-family:'Liberation Sans',sans-serif;">04/30/2020</div>
<div id="t114" class="t r" style="letter-spacing:-0.183px;left:1481.5px;top:830.79px;font-size:11px;font-weight:400;font-style:normal;color:#000;font-family:'Liberation Sans',sans-serif;">Izis Yassa</div>
<div id="t115" class="t r" style="letter-spacing:0.259px;left:1591px;top:830.79px;font-size:11px;font-weight:400;font-style:normal;color:#000;font-family:'Liberation Sans',sans-serif;">Form Entry</div>
<div style="position:absolute;left:0px;top:0px;width:1706px;height:10px;background:linear-gradient(to bottom, rgba(20,20,30,0.17) 0px, rgba(20,20,30,0.10) 1.5px, rgba(20,20,30,0.055) 3.5px, rgba(20,20,30,0.02) 6px, rgba(20,20,30,0) 9px)"></div>
</body></html>
